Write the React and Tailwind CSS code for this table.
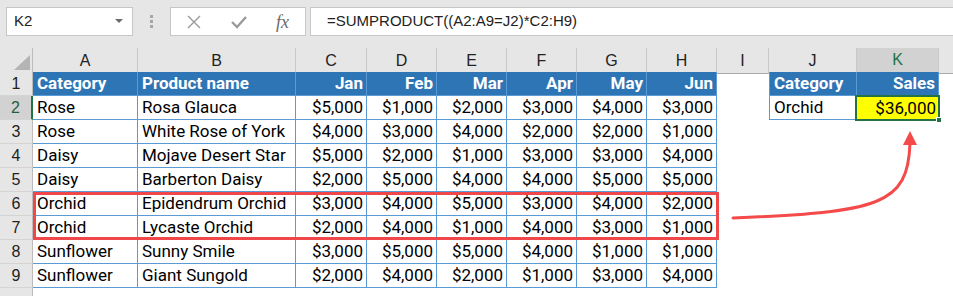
const data = [
  ['Rose', 'Rosa Glauca', 5000, 1000, 2000, 3000, 4000, 3000],
  ['Rose', 'White Rose of York', 4000, 3000, 4000, 2000, 2000, 1000],
  ['Daisy', 'Mojave Desert Star', 5000, 2000, 1000, 3000, 3000, 4000],
  ['Daisy', 'Barberton Daisy', 2000, 5000, 4000, 4000, 5000, 5000],
  ['Orchid', 'Epidendrum Orchid', 3000, 4000, 5000, 3000, 4000, 2000],
  ['Orchid', 'Lycaste Orchid', 2000, 4000, 1000, 4000, 3000, 1000],
  ['Sunflower', 'Sunny Smile', 3000, 5000, 5000, 4000, 1000, 1000],
  ['Sunflower', 'Giant Sungold', 2000, 4000, 2000, 1000, 3000, 4000],
];

const months = ['Jan', 'Feb', 'Mar', 'Apr', 'May', 'Jun'];
const letters = ['A', 'B', 'C', 'D', 'E', 'F', 'G', 'H', 'I', 'J', 'K'];

const gridCols = 'grid grid-cols-[33px_105px_158px_71px_70px_70px_70px_70px_70px_52px_88px_82px_1fr]';
const cellFont = "font-['Roboto',sans-serif] text-[17px] text-black";
const headFont = "font-['Liberation_Sans',Arial,sans-serif] text-[16px]";
const barFont = "font-['Liberation_Sans',Arial,sans-serif] text-[15px]";

const money = (n) => '$' + n.toLocaleString('en-US');

const RowHead = ({ n, active }) => (
  <div
    className={`${headFont} h-[24px] flex items-center justify-center border-b border-[#d4d4d4] ${
      active
        ? 'bg-[#d2d2d2] text-[#1e5e3a] border-r-2 border-r-[#217346]'
        : 'bg-[#e6e6e6] text-[#222] border-r border-r-[#bcbcbc]'
    }`}
  >
    {n}
  </div>
);

const TCell = ({ children, right, head, leftBorder }) => (
  <div
    className={`h-[24px] flex items-center pt-[1px] border-r border-b border-[#5b9bd5] ${leftBorder ? 'border-l' : ''} ${
      right ? 'justify-end pr-[3px]' : 'pl-[4px]'
    } ${cellFont} ${head ? 'bg-[#2e75b6] font-bold !text-white' : ''}`}
  >
    {children}
  </div>
);

const Empty = () => <div className="h-[24px]" />;

export default function App() {
  return (
    <div className="relative w-[953px] h-[296px] overflow-hidden bg-white">
      {/* formula bar */}
      <div className="h-[48px] bg-[#e6e6e6] flex items-start pt-[7px]">
        <div className="ml-[6px] w-[127px] h-[29px] bg-white border border-[#c6c6c6] flex items-center justify-between pl-[7px] pr-[9px]">
          <span className={`${barFont} text-[#222]`}>K2</span>
          <svg width="8" height="5" viewBox="0 0 8 5">
            <path d="M0 0 L8 0 L4 4 Z" fill="#6b6b6b" />
          </svg>
        </div>
        <div className="w-[37px] h-[29px] flex flex-col items-center justify-center gap-[2px]">
          <span className="w-[3px] h-[3px] bg-[#a6a6a6]" />
          <span className="w-[3px] h-[3px] bg-[#a6a6a6]" />
          <span className="w-[3px] h-[3px] bg-[#a6a6a6]" />
        </div>
        <div className="w-[136px] h-[29px] bg-white border border-[#c6c6c6] flex items-center pl-[16px]">
          <svg width="14" height="14" viewBox="0 0 14 14">
            <path d="M1 1 L13 13 M13 1 L1 13" stroke="#9a9a9a" strokeWidth="1.4" />
          </svg>
          <svg width="16" height="14" viewBox="0 0 16 14" className="ml-[30px]">
            <path d="M1 7 L6 12 L15 2" stroke="#9a9a9a" strokeWidth="2.4" fill="none" />
          </svg>
          <span className="ml-[29px] font-['Liberation_Serif',serif] italic text-[18px] text-[#6a6a6a] leading-none">
            fx
          </span>
        </div>
        <div className="ml-[4px] flex-1 h-[29px] bg-white border border-r-0 border-[#c6c6c6] flex items-center pl-[16px]">
          <span className={`${barFont} text-[#222]`}>=SUMPRODUCT((A2:A9=J2)*C2:H9)</span>
        </div>
      </div>

      {/* column headers */}
      <div className={`${gridCols} h-[24px]`}>
        <div className="bg-[#e6e6e6] border-r border-b border-[#bcbcbc] flex items-end justify-end pr-[2px] pb-[3px]">
          <svg width="16" height="15" viewBox="0 0 16 15">
            <path d="M16 0 L16 15 L0 15 Z" fill="#b4b4b4" />
          </svg>
        </div>
        {letters.map((l) => (
          <div
            key={l}
            className={`${headFont} flex items-center justify-center border-r border-[#c8c8c8] ${
              l === 'K'
                ? 'bg-[#d2d2d2] text-[#217346] border-b-2 border-b-[#217346]'
                : 'bg-[#e6e6e6] text-[#222] border-b border-b-[#ababab]'
            }`}
          >
            {l}
          </div>
        ))}
        <div className="bg-[#e6e6e6] border-b border-[#ababab]" />
      </div>

      {/* row 1 */}
      <div className={gridCols}>
        <RowHead n={1} />
        <TCell head>Category</TCell>
        <TCell head>Product name</TCell>
        {months.map((m) => (
          <TCell key={m} head right>
            {m}
          </TCell>
        ))}
        <Empty />
        <TCell head leftBorder>Category</TCell>
        <TCell head right>Sales</TCell>
        <Empty />
      </div>

      {data.map((r, i) => (
        <div key={i} className={gridCols}>
          <RowHead n={i + 2} active={i === 0} />
          <TCell>{r[0]}</TCell>
          <TCell>{r[1]}</TCell>
          {r.slice(2).map((v, j) => (
            <TCell key={j} right>
              {money(v)}
            </TCell>
          ))}
          <Empty />
          {i === 0 ? (
            <>
              <TCell leftBorder>Orchid</TCell>
              <div className={`h-[24px] flex items-center pt-[1px] justify-end pr-[3px] bg-[#ffff00] ${cellFont}`}>$36,000</div>
            </>
          ) : (
            <>
              <Empty />
              <Empty />
            </>
          )}
          <Empty />
        </div>
      ))}

      {/* row 10, cut off */}
      <div className={gridCols}>
        <div className="h-[24px] bg-[#e6e6e6] border-r border-[#bcbcbc]" />
      </div>

      {/* selected cell K2 */}
      <div className="absolute left-[855px] top-[95px] w-[85px] h-[26px] border-2 border-[#217346]" />
      <div className="absolute left-[936px] top-[117px] w-[6px] h-[6px] bg-[#217346] border border-white" />

      {/* highlight box on Orchid rows */}
      <div className="absolute left-[33px] top-[192px] w-[686px] h-[48px] border-[3px] border-[#f0484a]" />

      {/* arrow */}
      <svg className="absolute left-0 top-0 pointer-events-none" width="953" height="296" viewBox="0 0 953 296">
        <path d="M733 218 C880 212 908 205 910 143" stroke="#f44a4a" strokeWidth="3" fill="none" strokeLinecap="round" />
        <path d="M910 131 L917 145 L903 145 Z" fill="#f44a4a" />
      </svg>
    </div>
  );
}
